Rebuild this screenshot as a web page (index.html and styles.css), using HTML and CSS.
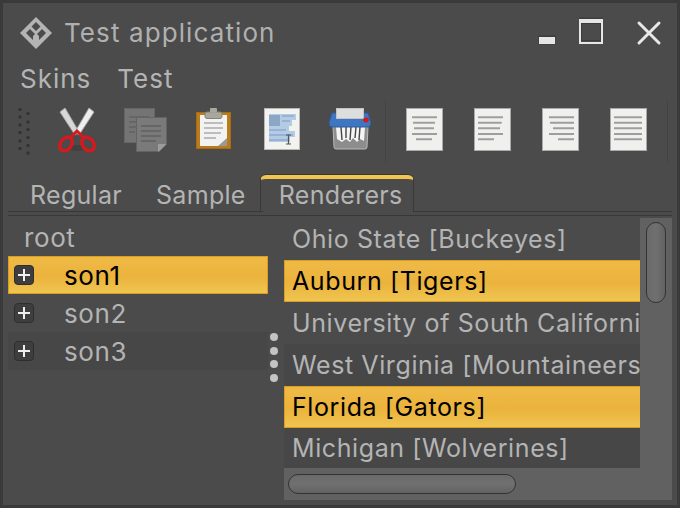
FILE: index.html
```html
<!DOCTYPE html>
<html>
<head>
    <title>Test application</title>
    <link rel="stylesheet" href="styles.css">
</head>
<body>
    <div class="window">
        <div class="titlebar">
            <svg class="logo" width="32" height="32" viewBox="0 0 32 32">
                <path fill="#b4b4b4" fill-rule="evenodd" d="M16 0 L32 16 L16 32 L0 16 Z M16 5 L20.500 9.500 L16 14 L11.500 9.500 Z M6 16 L10 12 L15 17 L13 19 L13 23 Z M26 16 L22 12 L17 17 L19 19 L19 23 Z"/>
            </svg>
            <span class="title">Test application</span>
            <div class="controls">
                <svg class="ctl-min" width="18" height="10" viewBox="0 0 18 10"><rect x="0.500" y="0.500" width="17" height="9" fill="#3c3c3c"/><rect x="1" y="2" width="16" height="7" fill="#e6e6e6"/></svg>
                <svg class="ctl-max" width="26" height="28" viewBox="0 0 26 28"><rect x="3.500" y="6.500" width="19" height="17" fill="none" stroke="#3c3c3c"/><rect x="2" y="3" width="22" height="23" fill="none" stroke="#e6e6e6" stroke-width="2"/><rect x="2" y="3" width="22" height="3" fill="#e6e6e6"/><rect x="1" y="0.500" width="24" height="1.500" fill="#3f3f3f"/></svg>
                <svg class="ctl-close" width="26" height="26" viewBox="0 0 26 26"><path d="M3 3 L23 23 M23 3 L3 23" stroke="#e8e8e8" stroke-width="3" stroke-linecap="round"/></svg>
            </div>
        </div>

        <div class="menubar">
            <span class="menu-item">Skins</span>
            <span class="menu-item">Test</span>
        </div>

        <div class="toolbar">
            <svg class="grip" width="14" height="50" viewBox="0 0 14 50">
                <g fill="#333">
                    <circle cx="4" cy="1.500" r="1.700"/><circle cx="4" cy="9" r="1.700"/><circle cx="4" cy="17" r="1.700"/><circle cx="4" cy="24.500" r="1.700"/><circle cx="4" cy="33" r="1.700"/><circle cx="4" cy="40.500" r="1.700"/>
                    <circle cx="12" cy="5.500" r="1.700"/><circle cx="12" cy="14" r="1.700"/><circle cx="12" cy="21.500" r="1.700"/><circle cx="12" cy="29.500" r="1.700"/><circle cx="12" cy="37.500" r="1.700"/><circle cx="12" cy="45" r="1.700"/>
                </g>
            </svg>

            <div class="tool">
                <svg width="44" height="48" viewBox="0 0 44 48">
                    <ellipse cx="22" cy="40" rx="10" ry="3" fill="#404040"/>
                    <path d="M5 4 L10 0 L24 24 L20 27 Z" fill="#d8d8d8" stroke="#a8a8a8"/>
                    <path d="M39 4 L34 0 L20 24 L24 27 Z" fill="#eeeeee" stroke="#a8a8a8"/>
                    <ellipse cx="11" cy="36" rx="5.500" ry="7.500" transform="rotate(38 11 36)" fill="none" stroke="#d41a1e" stroke-width="3.400"/>
                    <ellipse cx="33" cy="36" rx="5.500" ry="7.500" transform="rotate(-38 33 36)" fill="none" stroke="#d41a1e" stroke-width="3.400"/>
                    <path d="M15 30 L22 23 L29 30" fill="none" stroke="#d41a1e" stroke-width="3"/>
                </svg>
            </div>
            <div class="tool">
                <svg width="44" height="48" viewBox="0 0 44 48">
                    <rect x="1.500" y="0.500" width="30" height="34" fill="#747474" stroke="#666"/>
                    <path d="M6 9 H26 M6 14 H26 M6 19 H26 M6 24 H12" stroke="#666" stroke-width="2"/>
                    <path d="M13.500 9.500 H43.500 V36 L36 43.500 H13.500 Z" fill="#7a7a7a" stroke="#636363"/>
                    <path d="M18 18 H38 M18 23 H38 M18 28 H38 M18 33 H33" stroke="#666" stroke-width="2"/>
                    <path d="M35 36 H43.500 L36 43.500 H35 Z" fill="#9c9c9c"/>
                </svg>
            </div>
            <div class="tool">
                <svg width="44" height="48" viewBox="0 0 44 48">
                    <rect x="5.500" y="4.500" width="34" height="36" fill="#b97c1c" stroke="#a56c12"/>
                    <rect x="9" y="7" width="27" height="31" fill="#f2f2f2"/>
                    <path d="M13 15 H32 M13 20 H32 M13 25 H30 M13 30 H25" stroke="#bdbdbd" stroke-width="2"/>
                    <path d="M27 38 L36 30 V38 Z" fill="#9a9a92"/>
                    <rect x="14" y="4" width="17" height="6.500" rx="2" fill="#a8a89c" stroke="#83837a"/>
                    <rect x="19" y="0" width="7" height="4.500" rx="1" fill="#a8a89c"/>
                </svg>
            </div>
            <div class="tool">
                <svg width="44" height="48" viewBox="0 0 44 48">
                    <rect x="5.500" y="0.500" width="35" height="41" fill="#f2f2ee" stroke="#b8b8b8"/>
                    <path d="M10 6 H37 V12 H33 V18 H30 V23 H36 V29 H31 V34 H10 Z" fill="#b3cbe4"/>
                    <rect x="10" y="7" width="11" height="11" fill="#8ba7c5"/>
                    <path d="M23 8 H35 M23 13 H31 M10 22 H27 M10 27 H34 M10 32 H29" stroke="#8eaacb" stroke-width="1.600"/>
                    <path d="M27 27 H32 M29.500 27 V36 M27 36 H32" stroke="#555" stroke-width="1.200" fill="none"/>
                </svg>
            </div>
            <div class="tool">
                <svg width="44" height="48" viewBox="0 0 44 48">
                    <path d="M6 19 H41 L40 39 Q40 41 38 41 H9 Q7 41 7 39 Z" fill="#8d8d8d" stroke="#b8b8b8"/>
                    <path d="M9 19 H38 L37 33 L33 31 L30 34 L26 30 L23 34 L19 31 L15 34 L10 31 Z" fill="#f4f4f4"/>
                    <path d="M14 19 L15 32 M19 19 L19 30 M24 19 L23 32 M29 19 L28 30 M33 19 L32 32" stroke="#444" stroke-width="1.400"/>
                    <path d="M5 5 H41 L44 15 Q44 19 41 19 H5 Q2 19 2 15 Z" fill="#3f76c2" stroke="#2d5a9c"/>
                    <rect x="9.500" y="0.500" width="27" height="10" fill="#dedede" stroke="#c4c4c4"/>
                    <ellipse cx="39" cy="12" rx="2.800" ry="2.400" fill="#d21a22"/>
                </svg>
            </div>

            <div class="sep"></div>

            <div class="tool">
                <svg width="44" height="48" viewBox="0 0 44 48"><rect x="4.500" y="0.500" width="36" height="42" class="page" /><path d="M10 9.300 H35 M11 14.700 H33 M12 20.300 H32 M10 26 H35 M14 31.300 H30" class="page-lines"/></svg>
            </div>
            <div class="tool">
                <svg width="44" height="48" viewBox="0 0 44 48"><rect x="4.500" y="0.500" width="36" height="42" class="page" /><path d="M8 9.300 H33 M8 14.700 H31.700 M8 20.300 H30 M8 26 H33 M8 31.300 H24" class="page-lines"/></svg>
            </div>
            <div class="tool">
                <svg width="44" height="48" viewBox="0 0 44 48"><rect x="4.500" y="0.500" width="36" height="42" class="page" /><path d="M11 9.300 H36 M12 14.700 H36 M15 20.300 H36 M11 26 H36 M20 31.300 H36" class="page-lines"/></svg>
            </div>
            <div class="tool">
                <svg width="44" height="48" viewBox="0 0 44 48"><rect x="4.500" y="0.500" width="36" height="42" class="page" /><path d="M8 9.300 H36 M8 14.700 H36 M8 20.300 H36 M8 26 H36 M8 31.300 H36" class="page-lines"/></svg>
            </div>

            <div class="sep sep-last"></div>
        </div>

        <div class="tabs">
            <div class="tab">Regular</div>
            <div class="tab">Sample</div>
            <div class="tab tab-active">Renderers</div>
            <div class="tab-fill"></div>
        </div>

        <div class="content">
            <div class="tree">
                <div class="tree-row tree-root">root</div>
                <div class="tree-row tree-selected"><span class="expander"></span>son1</div>
                <div class="tree-row"><span class="expander"></span>son2</div>
                <div class="tree-row tree-dark"><span class="expander"></span>son3</div>
            </div>

            <div class="divider">
                <span class="dot"></span>
                <span class="dot"></span>
                <span class="dot"></span>
                <span class="dot"></span>
            </div>

            <div class="scroll-pane">
                <div class="list">
                    <div class="list-row">Ohio State [Buckeyes]</div>
                    <div class="list-row selected">Auburn [Tigers]</div>
                    <div class="list-row">University of South California</div>
                    <div class="list-row dark">West Virginia [Mountaineers]</div>
                    <div class="list-row selected">Florida [Gators]</div>
                    <div class="list-row dark last">Michigan [Wolverines]</div>
                </div>
                <div class="vbar"><div class="vthumb"></div></div>
                <div class="hbar"><div class="hthumb"></div></div>
            </div>
        </div>
    </div>
</body>
</html>
```

FILE: styles.css
```css
html, body {
    margin: 0;
    padding: 0;
}

body {
    width: 680px;
    height: 508px;
    overflow: hidden;
    font-family: "Inter", "Liberation Sans", sans-serif;
    color: #bcbcbc;
}

.window {
    width: 680px;
    height: 508px;
    box-sizing: border-box;
    border: 3px solid #3a3a3a;
    background-color: #4b4b4b;
    display: flex;
    flex-direction: column;
}

.titlebar {
    height: 55px;
    display: flex;
    align-items: center;
    padding: 4px 15px 0 17px;
    box-sizing: border-box;
}

.title {
    margin-left: 12px;
    font-size: 26px;
    letter-spacing: 1.1px;
    color: #b0b0b0;
}

.controls {
    margin-left: auto;
    display: flex;
    align-items: center;
}

.ctl-min {
    margin-top: 14px;
}

.ctl-max {
    margin-left: 22px;
    margin-top: -4px;
}

.ctl-close {
    margin-left: 32px;
}

.menubar {
    height: 39px;
    box-sizing: border-box;
    padding: 2px 0 0 17px;
    display: flex;
    align-items: center;
    gap: 26px;
    font-size: 26px;
    letter-spacing: 1px;
    color: #b4b4b4;
}

.toolbar {
    height: 66px;
    margin-top: 3px;
    padding-left: 13px;
    display: flex;
    align-items: flex-start;
}

.grip {
    margin: 8px 13px 0 0;
}

.tool {
    width: 68px;
    margin-top: 8px;
    display: flex;
    justify-content: center;
}

.page {
    fill: #f0f0ee;
    stroke: #aaa;
}

.page-lines {
    stroke: #9e9e9e;
    stroke-width: 2;
}

.sep {
    width: 1px;
    height: 63px;
    margin: 0 4px 0 2px;
    background-color: #434343;
}

.sep-last {
    margin-left: 5px;
}

.tabs {
    height: 41px;
    margin: 8px 5px 0;
    display: flex;
    align-items: flex-end;
    font-size: 25px;
    letter-spacing: 0.3px;
    border-bottom: 1px solid #383838;
}

.tab {
    height: 38px;
    box-sizing: border-box;
    padding: 6px 17px 0 17px;
    border-bottom: 1px solid #383838;
    margin-bottom: 3px;
    color: #b4b4b4;
}

.tab:first-child {
    padding-left: 22px;
}

.tab-active {
    height: 37px;
    margin-left: -3px;
    padding: 1px 10px 0 18px;
    border: 1px solid #383838;
    border-top: 4px solid #f2c54f;
    border-bottom: none;
    border-radius: 6px 6px 0 0;
    box-shadow: 0 -1px #383838;
}

.tab-fill {
    flex: 1;
    margin-bottom: 3px;
    border-bottom: 1px solid #383838;
}

.content {
    flex: 1;
    min-height: 0;
    margin: 2px 5px 5px;
    display: flex;
}

.tree {
    width: 260px;
    font-size: 26px;
    letter-spacing: 0.6px;
}

.tree-row {
    height: 38px;
    box-sizing: border-box;
    display: flex;
    align-items: center;
    padding-left: 6px;
    color: #b4b4b4;
}

.tree-root {
    padding-left: 16px;
}

.tree-dark {
    background-color: #474747;
}

.tree-selected {
    color: #000;
    border: 1px solid #dc9c1e;
    padding-left: 5px;
    background: linear-gradient(#eeba46, #ebb33c 55%, #efc551);
}

/* plus sign is two bars painted over the box colour */
.expander {
    width: 20px;
    height: 20px;
    box-sizing: border-box;
    margin-right: 30px;
    border: 1px solid #2e2e2e;
    border-radius: 4px;
    background-color: #3e3e3e;
    background-image: linear-gradient(#f0f0f0, #f0f0f0), linear-gradient(#f0f0f0, #f0f0f0);
    background-size: 12px 2px, 2px 12px;
    background-position: center;
    background-repeat: no-repeat;
}

.divider {
    width: 16px;
    height: 282px;
    box-sizing: border-box;
    padding: 0 4px 3px 0;
    display: flex;
    flex-direction: column;
    align-items: center;
    justify-content: center;
    gap: 5.600px;
}

.dot {
    width: 8px;
    height: 8px;
    border-radius: 50%;
    background-color: #c4c4c4;
}

.scroll-pane {
    width: 388px;
    height: 282px;
    display: grid;
    grid-template-columns: 356px 32px;
    grid-template-rows: 250px 32px;
    background-color: #616161;
}

.list {
    overflow: hidden;
    background-color: #4b4b4b;
    font-size: 25px;
    letter-spacing: 0.6px;
}

.list-row {
    height: 42px;
    box-sizing: border-box;
    padding-left: 8px;
    display: flex;
    align-items: center;
    white-space: nowrap;
    color: #b4b4b4;
}

.list-row.dark {
    background-color: #474747;
}

.list-row.last {
    height: 40px;
}

.list-row.selected {
    color: #000;
    border: 1px solid #dc9c1e;
    border-right: none;
    padding-left: 7px;
    background: linear-gradient(#eeba46, #ebb33c 55%, #efc551);
}

.vbar {
    padding: 4px 6px;
    box-sizing: border-box;
}

.vthumb {
    width: 20px;
    height: 81px;
    box-sizing: border-box;
    border: 1px solid #333;
    border-radius: 10px;
    background: linear-gradient(to right, #6a6a6a, #707070 50%, #626262);
}

.hbar {
    padding: 6px 4px;
    box-sizing: border-box;
}

.hthumb {
    width: 228px;
    height: 20px;
    box-sizing: border-box;
    border: 1px solid #333;
    border-radius: 10px;
    background: linear-gradient(#6a6a6a, #707070 50%, #626262);
}
```
